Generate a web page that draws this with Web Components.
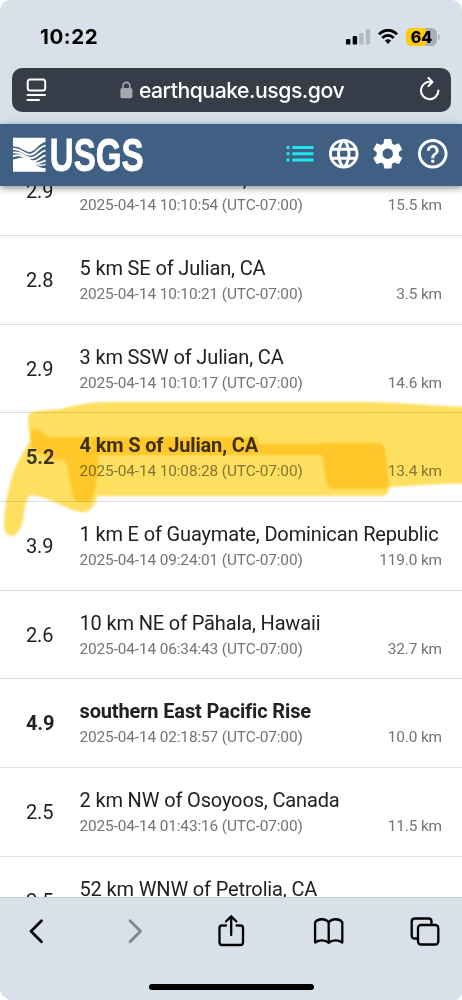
<!DOCTYPE html>
<html lang="en">
<head>
<meta charset="utf-8">
<title>Latest Earthquakes</title>
<style>
html,body{margin:0;height:100%;background:#fff}
body{overflow:hidden}
</style>
</head>
<body>
<phone-screen></phone-screen>
<script>
const define=(name,html,setup)=>customElements.define(name,class extends HTMLElement{
  constructor(){
    super();
    const t=document.createElement('template');
    t.innerHTML=html;
    this.attachShadow({mode:'open'}).appendChild(t.content.cloneNode(true));
  }
  connectedCallback(){ if(setup) setup(this,this.shadowRoot); }
});

define('status-bar',`
<style>
:host{display:flex;height:68px;box-sizing:border-box;padding:6px 23px 0 40px;align-items:center;justify-content:space-between;font:700 20.5px/24px Inter,sans-serif;color:#000}
.r{display:flex;align-items:center}
.time{letter-spacing:.6px}
.bat{box-sizing:border-box;width:31px;height:18px;border-radius:5.5px;background:linear-gradient(90deg,#fecb09 0 65%,#a9afb8 65%);font-weight:800;font-size:16px;line-height:18px;text-align:center;margin-left:8px}
.nub{width:2px;height:6px;border-radius:0 2px 2px 0;background:#b5bbc4;margin:0 -1px 0 1px}
svg{display:block}
</style>
<span class="time">10:22</span>
<div class="r">
<svg width="25" height="16" viewBox="0 0 25 16"><rect x="0" y="10" width="4.4" height="5.6" rx="1.2"/><rect x="6.7" y="7" width="4.4" height="8.6" rx="1.2"/><g fill="#b3bac4"><rect x="13.2" y="4" width="4.4" height="11.6" rx="1.2"/><rect x="19.8" y="0" width="4.4" height="15.6" rx="1.2"/></g></svg>
<svg width="20" height="16" viewBox="0 0 20 16" style="margin-left:7.5px" fill="none" stroke="#000" stroke-width="2.8"><path d="M1 5.4C6-.1 14-.1 19 5.4"/><path d="M4.3 9C7.5 5.6 12.5 5.6 15.7 9"/><path d="M6.9 11.6Q10 8.8 13.1 11.6L10 15Z" fill="#000" stroke="none"/></svg>
<span class="bat">64</span><i class="nub"></i>
</div>`);

define('address-bar',`
<style>
:host{display:flex;box-sizing:border-box;height:44px;margin:0 11px 0 12px;padding:0 10px 0 14px;border-radius:10px;background:#363d48;align-items:center;color:#fff;font:500 21.2px/30px Inter,sans-serif;letter-spacing:-.47px}
.u{flex:1;display:flex;align-items:center;justify-content:center;padding:0 3px 1px 0}
svg{display:block;flex:none}
</style>
<svg width="22" height="24" viewBox="0 0 22 24" fill="none" stroke="#fff" stroke-width="2" stroke-linecap="round"><rect x="1.7" y="1.6" width="17.5" height="11" rx="2.5"/><path d="M1.5 17H19M1.5 22h11.5"/></svg>
<div class="u"><svg width="13" height="18" viewBox="0 0 13 18"><rect x=".4" y="7" width="12" height="10.3" rx="1.8" fill="#a5a7b2"/><path d="M3 8V4.8a3.4 3.4 0 0 1 6.8 0V8" fill="none" stroke="#a5a7b2" stroke-width="1.6"/></svg><span style="margin-left:6px"><slot></slot></span></div>
<svg width="22" height="24" viewBox="0 0 22 24" style="margin-top:-2px" fill="none" stroke="#fff" stroke-width="2.1" stroke-linecap="round" stroke-linejoin="round"><path d="M11.8 4.9A8.7 8.7 0 1 0 19.4 13.5M9.5 1 13.4 5 9.5 8.9"/></svg>`);

define('usgs-header',`
<style>
:host{display:flex;box-sizing:border-box;height:61.7px;padding:0 15px .7px 13px;align-items:center;justify-content:space-between;background:#3f5f83;box-shadow:0 2px 7px rgba(0,0,0,.45);position:relative;z-index:2}
.i{display:flex;align-items:center;gap:14px;margin-top:-2px}
svg{display:block}
</style>
<svg width="132" height="36" viewBox="0 0 132 36" fill="#fff" overflow="visible">
<path d="M0 .8H32.6V4.8C26 6.5 22 14.5 17 15 12 15.5 8 9.5 0 9.6Z"/>
<path d="M0 34.8V22.6C4 21.5 8 20 12 20.6 17 22 22 31 32.6 31.3V34.8Z"/>
<g fill="none" stroke="#fff" stroke-width="1.9"><path d="M0 12C8 11.5 11 17.8 17 17.8S25 9.6 32.6 8.6"/><path d="M0 15.6C9 14 12 20.8 18 21S26 14.6 32.6 13.4"/><path d="M0 19.3C9 15.4 13 23 19 24.2S27 19.6 32.6 18.4"/><path d="M14 20.5C21 27.5 24 27.8 32.6 23.4"/><path d="M19 25.6Q25 30 32.6 27.4" stroke-width="1.5"/></g>
<text x="36.7" y="34.4" font-family="Liberation Sans,sans-serif" font-weight="700" font-size="47" textLength="94" lengthAdjust="spacingAndGlyphs" stroke="#fff" stroke-width=".8">USGS</text></svg>
<div class="i">
<svg width="28" height="20" viewBox="0 0 28 20" fill="#1fe5ee"><path d="M.5 2h3v3h-3zM6.3 2h21.2v3H6.3zM.5 8.2h3v3h-3zM6.3 8.2h21.2v3H6.3zM.5 14.4h3v3h-3zM6.3 14.4h21.2v3H6.3z"/></svg>
<svg width="35.5" height="35.5" viewBox="0 0 24 24" style="margin-left:-2px" fill="#fff"><path d="M11.99 2C6.47 2 2 6.48 2 12s4.47 10 9.99 10C17.52 22 22 17.52 22 12S17.52 2 11.99 2zm6.93 6h-2.95c-.32-1.25-.78-2.45-1.38-3.56 1.84.63 3.37 1.91 4.33 3.56zM12 4.04c.83 1.2 1.48 2.53 1.91 3.96h-3.82c.43-1.43 1.08-2.76 1.91-3.96zM4.26 14C4.1 13.36 4 12.69 4 12s.1-1.36.26-2h3.38c-.08.66-.14 1.32-.14 2s.06 1.34.14 2H4.26zm.82 2h2.95c.32 1.25.78 2.45 1.38 3.56-1.84-.63-3.37-1.9-4.33-3.56zm2.95-8H5.08c.96-1.66 2.49-2.93 4.33-3.56C8.81 5.55 8.35 6.75 8.03 8zM12 19.96c-.83-1.2-1.48-2.53-1.91-3.96h3.82c-.43 1.43-1.08 2.76-1.91 3.96zM14.34 14H9.66c-.09-.66-.16-1.32-.16-2s.07-1.35.16-2h4.68c.09.65.16 1.32.16 2s-.07 1.34-.16 2zm.25 5.56c.6-1.11 1.06-2.31 1.38-3.56h2.95c-.96 1.65-2.49 2.93-4.33 3.56zM16.36 14c.08-.66.14-1.32.14-2s-.06-1.34-.14-2h3.38c.16.64.26 1.31.26 2s-.1 1.36-.26 2h-3.38z"/></svg>
<svg width="35.5" height="35.5" viewBox="0 0 24 24" style="margin-left:-5px" fill="#fff"><path d="M19.43 12.98c.04-.32.07-.64.07-.98s-.03-.66-.07-.98l2.11-1.65c.19-.15.24-.42.12-.64l-2-3.46c-.12-.22-.39-.3-.61-.22l-2.49 1c-.52-.4-1.08-.73-1.69-.98l-.38-2.65C14.46 2.18 14.25 2 14 2h-4c-.25 0-.46.18-.49.42l-.38 2.65c-.61.25-1.17.59-1.69.98l-2.49-1c-.23-.09-.49 0-.61.22l-2 3.46c-.13.22-.07.49.12.64l2.11 1.65c-.04.32-.07.65-.07.98s.03.66.07.98l-2.11 1.65c-.19.15-.24.42-.12.64l2 3.46c.12.22.39.3.61.22l2.49-1c.52.4 1.08.73 1.69.98l.38 2.65c.03.24.24.42.49.42h4c.25 0 .46-.18.49-.42l.38-2.65c.61-.25 1.17-.59 1.69-.98l2.49 1c.23.09.49 0 .61-.22l2-3.46c.12-.22.07-.49-.12-.64l-2.11-1.65zM12 15.5c-1.93 0-3.5-1.57-3.5-3.5s1.57-3.5 3.5-3.5 3.5 1.57 3.5 3.5-1.57 3.5-3.5 3.5z"/></svg>
<svg width="35.5" height="35.5" viewBox="0 0 24 24" style="margin:0 -3px 0 -5px" fill="#fff"><path d="M11 18h2v-2h-2v2zm1-16C6.48 2 2 6.48 2 12s4.48 10 10 10 10-4.48 10-10S17.52 2 12 2zm0 18c-4.41 0-8-3.59-8-8s3.59-8 8-8 8 3.59 8 8-3.59 8-8 8zm0-14c-2.21 0-4 1.79-4 4h2c0-1.1.9-2 2-2s2 .9 2 2c0 2-3 1.75-3 5h2c0-2.25 3-2.5 3-5 0-2.21-1.79-4-4-4z"/></svg>
</div>`);

define('quake-row',`
<style>
:host{display:grid;grid-template-columns:79.5px 1fr auto;grid-template-rows:26px 26px;height:88.65px;box-sizing:border-box;padding:19px 20px 0 0;border-bottom:1.5px solid #dededf;color:#212121;font-family:Roboto,sans-serif;white-space:nowrap}
.m{grid-row:1/3;padding-left:26px;font-size:20px;line-height:50.5px;letter-spacing:-.15px}
.t{grid-column:2/4;font-size:20px;line-height:26px;letter-spacing:-.145px}
.d,.k{font-size:15.4px;line-height:26px;color:#747474;letter-spacing:-.12px}
:host([big]) .m,:host([big]) .t{font-weight:700}
</style>
<span class="m"></span><span class="t"><slot></slot></span><span class="d"></span><span class="k"></span>`,
(el,r)=>{
  r.querySelector('.m').textContent=el.getAttribute('mag');
  r.querySelector('.d').textContent='2025-04-14 '+el.getAttribute('time')+' (UTC-07:00)';
  r.querySelector('.k').textContent=el.getAttribute('depth')+' km';
});

define('marker-highlight',`
<style>:host{display:block;position:absolute;left:0;top:209.3px;width:462px;height:150px;pointer-events:none;mix-blend-mode:multiply}
:host([tint]){mix-blend-mode:normal;opacity:.13}
svg{display:block;filter:blur(.8px)}</style>
<svg width="470" height="150" viewBox="0 395 470 150">
<path fill="#ffdf60" d="M28 420Q28 411 37 411L60 409Q82 403 105 402H365Q390 402 420 404.5T475 407V483L440 484 389 487V490Q388 496 380 496H97Q94 512 82 512C68 511 50 496 30 495Q25 500 23 520Q19 536 11 536Q4 535 4 524C6 490 14 463 30 442Z"/>
<path fill="#ffc526" d="M31 431Q39 427 48 437H258V444H322Q324 443 330 443H378Q384 443 385 450L389 484Q388 489 382 489H334Q328 489 327 484L322 455H98V468Q97 488 91 500Q83 505 75 500C70 487 70 475 66 461Q45 460 31 447Z" opacity=".93"/>
</svg>`);

define('safari-toolbar',`
<style>
:host{display:flex;flex-direction:column;box-sizing:border-box;height:103px;background:#d8e0e9;border-top:1px solid #c6cdd5;border-radius:0 0 8px 12px;align-items:center}
.b{display:flex;box-sizing:border-box;width:100%;height:68px;padding:0 21px 2px 20px;align-items:center;justify-content:space-between}
.h{width:165px;height:6.5px;border-radius:4px;background:#000;margin-top:18px}
svg{display:block}
</style>
<div class="b">
<svg width="32" height="34" viewBox="0 0 32 34" fill="none" stroke="#000" stroke-width="2.8" stroke-linecap="round" stroke-linejoin="round"><path d="M21.5 6.8 11 17.3 21.5 27.8"/></svg>
<svg width="32" height="34" viewBox="-1 0 32 34" fill="none" stroke="#80868d" stroke-width="2.8" stroke-linecap="round" stroke-linejoin="round"><path d="M12 6.8 22.5 17.3 12 27.8"/></svg>
<svg width="32" height="34" viewBox="0 0 32 34" fill="none" stroke="#000" stroke-width="2.3" stroke-linecap="round" stroke-linejoin="round"><path d="M11 11.5H7Q4.5 11.5 4.5 14V28.5Q4.5 31 7 31H25.5Q28 31 28 28.5V14Q28 11.5 25.5 11.5H21.5M16.2 21V2.5M11 7.5 16.2 2.3 21.4 7.5"/></svg>
<svg width="32" height="34" viewBox="-.7 0 32 34" fill="none" stroke="#000" stroke-width="2.3" stroke-linejoin="round"><path d="M16 8.5C13 4.2 5 4.2 2.4 8.3V28.5C6 26 12.5 25.5 16 28.8V8.5C19 4.2 27 4.2 29.6 8.3V28.5C26 26 19.5 25.5 16 28.8"/></svg>
<svg width="32" height="34" viewBox="0 0 32 34" fill="none" stroke="#000" stroke-width="2.3" stroke-linejoin="round"><rect x="9" y="11" width="20.3" height="19.5" rx="3"/><path d="M9 24.5H5.5Q2.7 24.5 2.7 21.5V7.5Q2.7 4.5 6 4.5H19.5Q22.5 4.5 22.5 7.5V11"/></svg>
</div><div class="h"></div>`);

define('phone-screen',`
<style>
:host{display:flex;flex-direction:column;width:462px;height:1000px;overflow:hidden;background:#fff}
.top{height:124px;background:linear-gradient(#d8e0e9 0 110px,#d4e1ea);border-radius:10px 10px 0 0;flex:none}
.view{height:711.3px;overflow:hidden;position:relative;background:#fff}
.list{margin-top:-38.3px}
</style>
<div class="top"><status-bar></status-bar><address-bar>earthquake.usgs.gov</address-bar></div>
<usgs-header></usgs-header>
<div class="view"><div class="list">
<quake-row mag="2.9" time="10:10:54" depth="15.5">5 km SSE of Julian, CA</quake-row>
<quake-row mag="2.8" time="10:10:21" depth="3.5">5 km SE of Julian, CA</quake-row>
<quake-row mag="2.9" time="10:10:17" depth="14.6">3 km SSW of Julian, CA</quake-row>
<quake-row big mag="5.2" time="10:08:28" depth="13.4">4 km S of Julian, CA</quake-row>
<quake-row mag="3.9" time="09:24:01" depth="119.0">1 km E of Guaymate, Dominican Republic</quake-row>
<quake-row mag="2.6" time="06:34:43" depth="32.7">10 km NE of Pāhala, Hawaii</quake-row>
<quake-row big mag="4.9" time="02:18:57" depth="10.0">southern East Pacific Rise</quake-row>
<quake-row mag="2.5" time="01:43:16" depth="11.5">2 km NW of Osoyoos, Canada</quake-row>
<quake-row mag="2.5" time="01:10:24" depth="2.4">52 km WNW of Petrolia, CA</quake-row>
</div><marker-highlight></marker-highlight><marker-highlight tint></marker-highlight></div>
<safari-toolbar></safari-toolbar>`);
</script>
</body>
</html>
